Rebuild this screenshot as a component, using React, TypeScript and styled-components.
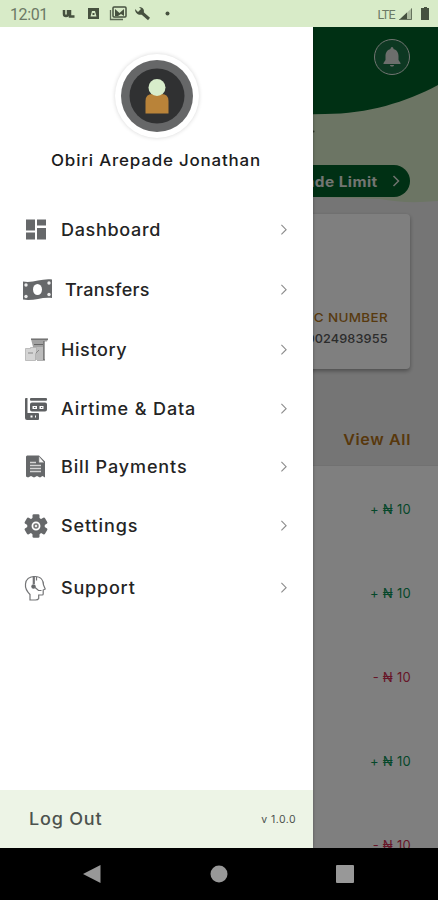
import React from "react";
import styled, { createGlobalStyle } from "styled-components";

const GlobalStyle = createGlobalStyle`
  * { box-sizing: border-box; }
  body { margin: 0; font-family: Inter, "Open Sans", sans-serif; }
`;

const Phone = styled.div`
  width: 438px;
  height: 900px;
  display: flex;
  flex-direction: column;
  overflow: hidden;
  background: #000;
`;

const StatusBar = styled.header`
  height: 27px;
  flex: none;
  display: flex;
  align-items: center;
  padding: 1px 7px 0 10px;
  background: #d8ebc8;
  color: #6c7965;
  font: 400 16px Roboto, sans-serif;
`;

const Clock = styled.span`
  width: 52px;
  letter-spacing: -0.4px;
`;

const StatusIcons = styled.div`
  display: flex;
  align-items: center;
  flex: 1;
  svg { display: block; }
`;

const Network = styled.span`
  font-size: 12.5px;
  letter-spacing: -0.7px;
  margin-right: 4px;
`;

const Stage = styled.main`
  position: relative;
  height: 821px;
  flex: none;
  overflow: hidden;
  background: #fff;
`;

const Screen = styled.div`
  display: flex;
  flex-direction: column;
`;

const Summary = styled.section`
  height: 439px;
  background: #ebebeb;
  border-bottom: 1px solid #e2e2e2;
`;

const Hero = styled.div`
  position: relative;
  height: 176px;
  padding: 12px 28px 0 0;
  display: flex;
  flex-direction: column;
  align-items: flex-end;
`;

const HeroShape = styled.svg`
  position: absolute;
  inset: 0;
`;

const Bell = styled.div`
  position: relative;
  width: 36px;
  height: 36px;
  border: 1.5px solid #e2e8e2;
  border-radius: 50%;
  background: #1b7045;
  display: grid;
  place-items: center;
`;

const LimitButton = styled.div`
  position: relative;
  margin-top: 90px;
  width: 170px;
  height: 32px;
  border-radius: 16px;
  background: #006028;
  color: #e6ebe4;
  display: flex;
  align-items: center;
  justify-content: flex-end;
  gap: 14px;
  padding-right: 10px;
`;

const LimitLabel = styled.span`
  font-size: 14px;
  font-weight: 700;
  letter-spacing: 0.4px;
  transform: scaleX(1.1);
  transform-origin: right;
`;

const AccountCard = styled.div`
  margin: 11px 28px 0;
  height: 155px;
  border-radius: 4px;
  background: #fff;
  box-shadow: 0 2px 4px rgba(0, 0, 0, 0.35);
  display: flex;
  flex-direction: column;
  align-items: flex-end;
  padding: 95px 22px 0 0;
`;

const AccountLabel = styled.span`
  color: #b0741c;
  font-size: 12px;
  line-height: 18px;
  font-weight: 500;
  letter-spacing: 0.3px;
  transform: scaleX(1.12);
  transform-origin: right;
`;

const AccountNumber = styled.span`
  color: #585858;
  font-size: 12px;
  line-height: 18px;
  margin-top: 3px;
  font-weight: 500;
  letter-spacing: 0.1px;
  transform: scaleX(1.06);
  transform-origin: right;
`;

const ViewAll = styled.div`
  margin: 61px 27px 0;
  text-align: right;
  color: #b07018;
  font-size: 15px;
  line-height: 20px;
  font-weight: 600;
  letter-spacing: 0.6px;
  transform: scaleX(1.07);
  transform-origin: right;
`;

const Transaction = styled.div<{ $credit: boolean }>`
  height: 84px;
  padding-right: 27px;
  line-height: 86px;
  text-align: right;
  font-size: 13px;
  font-weight: 400;
  letter-spacing: 0.25px;
  color: ${(p) => (p.$credit ? "#0a9054" : "#cf2d50")};
`;

const Scrim = styled.div`
  position: absolute;
  inset: 0;
  background: rgba(0, 0, 0, 0.5);
`;

const Drawer = styled.aside`
  position: absolute;
  left: 0;
  top: 0;
  bottom: 0;
  width: 313px;
  background: #fff;
  box-shadow: 0 0 3px rgba(0, 0, 0, 0.35);
  display: flex;
  flex-direction: column;
`;

const Profile = styled.div`
  height: 172px;
  flex: none;
  display: flex;
  flex-direction: column;
  align-items: center;
  padding-top: 27px;
`;

const Avatar = styled.div`
  width: 84px;
  height: 84px;
  border-radius: 50%;
  background: #fff;
  box-shadow: 0 0 4px rgba(0, 0, 0, 0.16);
  display: grid;
  place-items: center;
`;

const ProfileName = styled.div`
  margin-top: 11px;
  line-height: 22px;
  font-size: 16px;
  font-weight: 500;
  letter-spacing: 0.75px;
  transform: scaleX(1.06);
  color: #1c1c1c;
`;

const MenuItem = styled.div<{ $height: number }>`
  height: ${(p) => p.$height}px;
  flex: none;
  display: flex;
  align-items: center;
  padding: 0 25.5px 0 20px;
  color: #242424;
`;

const IconSlot = styled.span<{ $wide?: boolean }>`
  width: ${(p) => (p.$wide ? 44.5 : 40.5)}px;
  display: flex;
  padding-left: ${(p) => (p.$wide ? 2 : 4)}px;
`;

const MenuLabel = styled.span<{ $tracking: number }>`
  flex: 1;
  font-size: 17px;
  font-weight: 500;
  letter-spacing: ${(p) => p.$tracking}px;
  transform: scaleX(1.06);
  transform-origin: left;
`;

const DrawerFooter = styled.footer`
  margin-top: auto;
  height: 58px;
  display: flex;
  align-items: center;
  justify-content: space-between;
  padding: 0 17px 0 28.5px;
  background: #edf4e6;
  color: #4c524e;
`;

const LogOut = styled.span`
  font-size: 17px;
  font-weight: 500;
  letter-spacing: 0.75px;
  transform: scaleX(1.06);
  transform-origin: left;
`;

const Version = styled.span`
  font-size: 10.5px;
  letter-spacing: 0.45px;
`;

const NavBar = styled.nav`
  height: 52px;
  flex: none;
  display: flex;
  align-items: center;
  justify-content: space-between;
  padding: 0 84px 0 83px;
`;

const Chevron = ({ color = "#8c8c8c", size = 7.5, weight = 1.2 }) => (
  <svg width={size} height={size * 1.5} viewBox="0 0 8 12" fill="none" stroke={color} strokeWidth={weight}>
    <path d="M1.5 1 6.5 6 1.5 11" />
  </svg>
);

const DashboardIcon = () => (
  <svg width="24" height="22" viewBox="0 0 24 22" fill="#66686a">
    <path d="M2 .5h9v11H2zM13 .5h9v6h-9zM2 13.500h9v7H2zM13 9h9v11.500h-9z" />
  </svg>
);

const TransferIcon = () => (
  <svg width="31" height="23" viewBox="0 0 31 23">
    <path d="M1 2.500C11 4.500 20 -1 30 .5V19C20 17.500 11 22.500 1 20.500Z" fill="#66686a" />
    <ellipse cx="15.500" cy="10.500" rx="4.500" ry="5.500" fill="#fff" />
    <g fill="#ececec">
      <circle cx="4" cy="6" r="1.700" /><circle cx="27" cy="4" r="1.700" />
      <circle cx="4" cy="17.500" r="1.700" /><circle cx="27" cy="15.500" r="1.700" />
    </g>
  </svg>
);

const HistoryIcon = () => (
  <svg width="25" height="24" viewBox="0 0 25 24">
    <path d="M7 1h17l-1 2.500h-3V22h-9V10L9 9z" fill="#a2a2a2" />
    <path d="M7 1.200h17M10 6.500h9M20 3v18.500M13 22h8" stroke="#666" strokeWidth="1.200" />
    <path d="M9 9h10v13H9z" fill="#bcbcbc" />
    <path d="M1.500 10.500h5v-1h6v6h-1v7h-10z" fill="#d4d4d4" stroke="#aaa" strokeWidth=".7" />
    <path d="M4 15h5M12 15l3-3" stroke="#888" fill="none" />
  </svg>
);

const CardsIcon = () => (
  <svg width="24" height="24" viewBox="0 0 24 24">
    <g fill="#5e6062">
      <path d="M1 2q0-1 1-1h1.500v15H14q1 0 1 1v5q0 1-1 1H3q-2 0-2-2zM6.500 18.500v2h2v-2zM11 18.500v2h1v-2z" fillRule="evenodd" />
      <rect x="6" y="1" width="17" height="2.800" rx="1" />
      <path d="M8 5.500h13q2 0 2 2v5q0 2-2 2H8q-2 0-2-2v-5q0-2 2-2ZM8.500 9v3h4.500V9zM15.500 9v3h4V9z" fillRule="evenodd" />
    </g>
    <path d="M10 10h1.500v1H10zM17 10h1.300v1H17z" fill="#5e6062" />
  </svg>
);

const BillIcon = () => (
  <svg width="23" height="24" viewBox="0 0 23 24">
    <path d="M3 .5h12l6 6v16L18.500 21 16 22.500 13 21l-3 1.500L7 21l-3 1.500-2-1v-20z" fill="#66686a" />
    <path d="M15 1.500v6h5" fill="#f5f5f5" stroke="#999" strokeWidth=".6" />
    <path d="M6 7.500h6M6 10.500h11M6 13.500h11M6 16.500h11" stroke="#d4d4d4" strokeWidth="1.500" />
  </svg>
);

const SettingsIcon = () => (
  <svg width="24" height="24" viewBox="0 0 24 24">
    <g fill="#66686a">
      <circle cx="12" cy="12" r="8.800" />
      {[0, 60, 120].map((a) => (
        <rect key={a} x="8.500" y=".3" width="7" height="23.400" rx="1.300" transform={`rotate(${a} 12 12)`} />
      ))}
    </g>
    <circle cx="12" cy="12" r="3.600" fill="#777" stroke="#fff" strokeWidth="1.700" />
    <circle cx="12" cy="12" r="1.200" fill="#eee" />
  </svg>
);

const SupportIcon = () => (
  <svg width="23" height="27" viewBox="0 0 23 27" fill="none" stroke="#737476" strokeWidth="1.200">
    <path d="M6 25v-5.500C3 16.500 1 13 1.500 9 2 4 6 1.500 11 1.500c6 0 8.500 4 8.500 8.500l1.700 4-2 1v4q0 1-1 1h-3.500v3.500Q14 25 11.500 25Z" />
    <path d="M9.800 1v8" strokeWidth="2.200" />
    <path d="M12.500 2v3.500" />
    <circle cx="9.500" cy="11.500" r="2.200" fill="#66686a" stroke="none" />
    <path d="M10.500 12l4 3.500h3" />
  </svg>
);

const menu = [
  { label: "Dashboard", Icon: DashboardIcon, height: 61, tracking: 0.65 },
  { label: "Transfers", Icon: TransferIcon, height: 60, tracking: 0.3, wide: true },
  { label: "History", Icon: HistoryIcon, height: 60, tracking: 0.55 },
  { label: "Airtime & Data", Icon: CardsIcon, height: 57, tracking: 0.82 },
  { label: "Bill Payments", Icon: BillIcon, height: 59, tracking: 0.82 },
  { label: "Settings", Icon: SettingsIcon, height: 60, tracking: 0.85 },
  { label: "Support", Icon: SupportIcon, height: 64, tracking: 0.75 },
];

const credits = [true, true, false, true, false];

export default function App() {
  return (
    <Phone>
      <GlobalStyle />
      <StatusBar>
        <Clock>12:01</Clock>
        <StatusIcons>
          <svg width="112" height="20" viewBox="0 0 112 20">
            <path d="M2 6v4q0 2 2 2t2-2V6M8 6v6.500h4.500" fill="none" stroke="#46513f" strokeWidth="2.500" />
            <path d="M26 4h11v11H26zM28.500 12.500h6L33 7h-3z" fill="#46513f" fillRule="evenodd" />
            <path d="M30.500 9h2v2h-2z" fill="#46513f" />
            <path d="M48.500 6v9.500H61" fill="none" stroke="#5d6955" strokeWidth="1.300" />
            <rect x="51" y="3" width="13" height="10" rx="1" fill="none" stroke="#46513f" strokeWidth="1.500" />
            <path d="M53 12V5l4.500 4L62 5v7l-3-2-3 2z" fill="#46513f" />
            <path d="M79 8l8 7" stroke="#46513f" strokeWidth="3" />
            <path d="M73 5l3 3 3-3-2-2c5 0 6 4 4 7-3 2-8 0-8-5z" fill="#46513f" />
            <circle cx="105.500" cy="9.500" r="2" fill="#46513f" />
          </svg>
        </StatusIcons>
        <Network>LTE</Network>
        <svg width="32" height="16" viewBox="0 0 32 16">
          <path d="M0 14 13 2v12z" fill="#adbca0" />
          <path d="M0 14 8 6.500V14z" fill="#46513f" />
          <path d="M.5 13.500h12V2.500" stroke="#65725d" fill="none" />
          <path d="M23 2h2V1h3v1h2v12h-8V2z" fill="#46513f" />
        </svg>
      </StatusBar>
      <Stage>
        <Screen>
          <Summary>
            <Hero>
              <HeroShape width="438" height="176" viewBox="0 0 438 176">
                <path d="M0 0H438V174Q405 177 380 172L313 170H0Z" fill="#d8ebc8" />
                <path d="M0 0H438V58C406 75 368 87 325 87C200 90 80 70 0 30Z" fill="#006028" />
                <circle cx="313.500" cy="104.500" r="1" fill="#607056" />
              </HeroShape>
              <Bell>
                <svg width="18" height="22" viewBox="0 0 18 22" fill="#d8ddd8">
                  <path d="M9 1c1 0 1.500 1 1.500 2C14 4 15.500 7 15.500 10v4l2 3v1H.5v-1l2-3v-4c0-3 1.500-6 5-7C7.500 2 8 1 9 1ZM7 19h4c0 2-4 2-4 0Z" />
                </svg>
              </Bell>
              <LimitButton>
                <LimitLabel>Upgrade Limit</LimitLabel>
                <Chevron color="#e0e5de" size={8} weight={1.5} />
              </LimitButton>
            </Hero>
            <AccountCard>
              <AccountLabel>A/C NUMBER</AccountLabel>
              <AccountNumber>0024983955</AccountNumber>
            </AccountCard>
            <ViewAll>View All</ViewAll>
          </Summary>
          {credits.map((credit, i) => (
            <Transaction key={i} $credit={credit}>{credit ? "+" : "-"} ₦ 10</Transaction>
          ))}
        </Screen>
        <Scrim />
        <Drawer>
          <Profile>
            <Avatar>
              <svg width="72" height="72" viewBox="0 0 72 72">
                <circle cx="36" cy="36" r="36" fill="#666768" />
                <circle cx="36" cy="36" r="27.500" fill="#303132" />
                <path d="M24.500 53.500V41q0-7 7-7h9q7 0 7 7v12.500Z" fill="#b98339" />
                <circle cx="36" cy="27.500" r="8.500" fill="#d8edcb" />
              </svg>
            </Avatar>
            <ProfileName>Obiri Arepade Jonathan</ProfileName>
          </Profile>
          {menu.map(({ label, Icon, height, tracking, wide }) => (
            <MenuItem key={label} $height={height}>
              <IconSlot $wide={wide}><Icon /></IconSlot>
              <MenuLabel $tracking={tracking}>{label}</MenuLabel>
              <Chevron />
            </MenuItem>
          ))}
          <DrawerFooter>
            <LogOut>Log Out</LogOut>
            <Version>v 1.0.0</Version>
          </DrawerFooter>
        </Drawer>
      </Stage>
      <NavBar>
        <svg width="18" height="20" viewBox="0 0 18 20" fill="#989898"><path d="M0 10 17.500 1v18z" /></svg>
        <svg width="18" height="18" viewBox="0 0 18 18" fill="#989898"><circle cx="9" cy="9" r="8.500" /></svg>
        <svg width="18" height="18" viewBox="0 0 18 18" fill="#989898"><rect width="18" height="18" rx="1" /></svg>
      </NavBar>
    </Phone>
  );
}
